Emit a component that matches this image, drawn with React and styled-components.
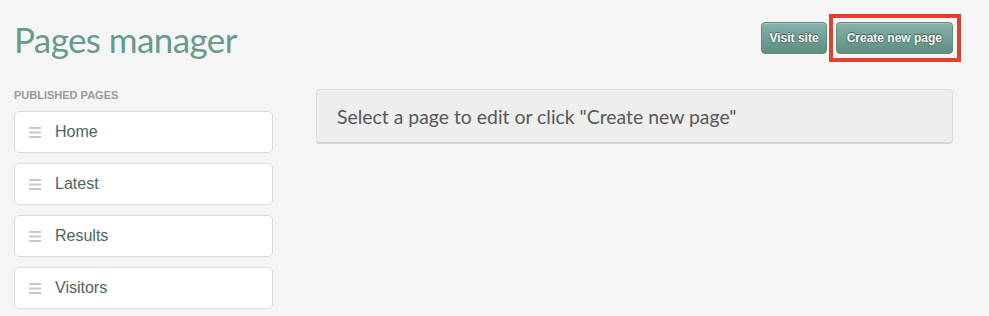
import React from "react";
import styled, { createGlobalStyle } from "styled-components";

const pages = ["Home", "Latest", "Results", "Visitors"];

const GlobalStyle = createGlobalStyle`
  html, body {
    margin: 0;
    padding: 0;
    background: #f5f5f5;
  }
`;

function App() {
  return (
    <>
      <GlobalStyle />
      <Page>
        <Header>
          <Title>Pages manager</Title>
          <Actions>
            <Button $compact>Visit site</Button>
            <Highlight>
              <Button>Create new page</Button>
            </Highlight>
          </Actions>
        </Header>
        <Body>
          <Sidebar>
            <SectionLabel>Published pages</SectionLabel>
            <PageList>
              {pages.map((name) => (
                <PageItem key={name}>
                  <Handle />
                  <PageName>{name}</PageName>
                </PageItem>
              ))}
            </PageList>
          </Sidebar>
          <Main>
            <Notice>Select a page to edit or click "Create new page"</Notice>
          </Main>
        </Body>
      </Page>
    </>
  );
}

function Handle() {
  return (
    <HandleIcon width="12" height="11" viewBox="0 0 12 11">
      <rect x="0" y="0" width="12" height="2" />
      <rect x="0" y="4.5" width="12" height="2" />
      <rect x="0" y="9" width="12" height="2" />
    </HandleIcon>
  );
}

const Page = styled.div`
  padding: 22px 36px 0 14px;
  min-height: 316px;
  box-sizing: border-box;
  background: #f5f5f5;
`;

const Header = styled.div`
  display: flex;
  justify-content: space-between;
  align-items: flex-start;
`;

const Title = styled.h1`
  margin: 0;
  font-family: Lato, "Open Sans", sans-serif;
  font-weight: 400;
  font-size: 35px;
  line-height: 35px;
  color: #699a8e;
  letter-spacing: -0.6px;
`;

const Actions = styled.div`
  display: flex;
  align-items: flex-start;
  gap: 7px;
`;

/* red annotation box drawn round a button, kept out of the layout */
const Highlight = styled.div`
  display: flex;
  border: 4px solid #e2412d;
  padding: 4px 4px 4px 3px;
  margin: -8px -8px -8px -5px;
`;

const Button = styled.button`
  height: 32px;
  padding: ${(p) => (p.$compact ? "0 7px" : "0 10px")};
  border: 1px solid #5f8a80;
  border-radius: 4px;
  background: linear-gradient(#86b3a9, #5f8d82);
  box-shadow: inset 0 1px 0 rgba(255, 255, 255, 0.25);
  color: #fff;
  font-family: "Liberation Sans", Arial, sans-serif;
  font-weight: 700;
  font-size: 12px;
  text-shadow: 0 0 2px rgba(25, 45, 40, 0.9), 0 -1px 0 rgba(0, 0, 0, 0.35);
  cursor: pointer;
`;

const Body = styled.div`
  display: grid;
  grid-template-columns: 259px 1fr;
  column-gap: 43px;
  margin-top: 32px;
`;

const Sidebar = styled.div`
  display: flex;
  flex-direction: column;
`;

const SectionLabel = styled.div`
  font-family: "Liberation Sans", Arial, sans-serif;
  font-weight: 700;
  font-size: 11px;
  line-height: 13px;
  text-transform: uppercase;
  color: #9a9a9a;
  margin-bottom: 9px;
`;

const PageList = styled.div`
  display: flex;
  flex-direction: column;
  gap: 10px;
`;

const PageItem = styled.div`
  display: flex;
  align-items: center;
  gap: 14px;
  height: 42px;
  box-sizing: border-box;
  padding-left: 14px;
  background: #fff;
  border: 1px solid #dcdcdc;
  border-radius: 5px;
`;

const HandleIcon = styled.svg`
  fill: #c8c8c8;
  flex-shrink: 0;
`;

const PageName = styled.span`
  font-family: "Liberation Sans", Arial, sans-serif;
  font-size: 16px;
  color: #4b6560;
`;

const Main = styled.div``;

const Notice = styled.div`
  display: flex;
  align-items: center;
  height: 55px;
  box-sizing: border-box;
  padding-left: 20px;
  background: #eeeeee;
  border: 1px solid #dddddd;
  border-bottom: 2px solid #d6d6d6;
  border-radius: 4px;
  font-family: Lato, "Open Sans", sans-serif;
  font-size: 19.4px;
  color: #585858;
`;

export default App;
